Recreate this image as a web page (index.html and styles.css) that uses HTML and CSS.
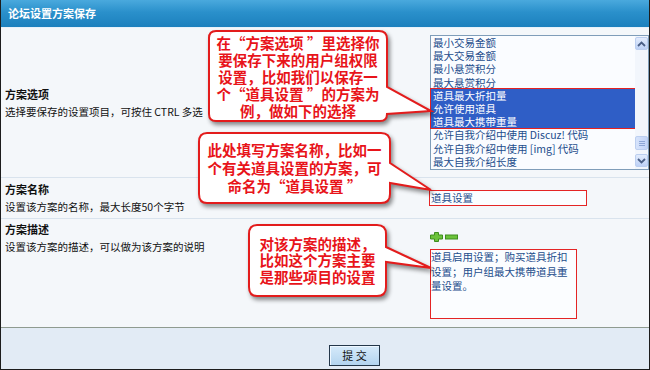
FILE: index.html
```html
<!DOCTYPE html>
<html lang="zh-CN">
<head>
<meta charset="utf-8">
<title>论坛设置方案保存</title>
<link rel="stylesheet" href="styles.css">
</head>
<body>
<div class="page">
  <div class="hdr">论坛设置方案保存</div>

  <div class="row r1">
    <div class="lbl"><b>方案选项</b><span>选择要保存的设置项目，可按住 CTRL 多选</span></div>
    <div class="ctl">
      <div class="select">
        <div class="opts">
          <div class="opt">最小交易金额</div>
          <div class="opt">最大交易金额</div>
          <div class="opt">最小悬赏积分</div>
          <div class="opt">最大悬赏积分</div>
          <div class="sel">
            <div class="opt">道具最大折扣量</div>
            <div class="opt">允许使用道具</div>
            <div class="opt">道具最大携带重量</div>
          </div>
          <div class="opt">允许自我介绍中使用 Discuz! 代码</div>
          <div class="opt">允许自我介绍中使用 [img] 代码</div>
          <div class="opt">最大自我介绍长度</div>
        </div>
        <div class="sbar">
          <div class="sbtn"><svg width="9" height="6" viewBox="0 0 9 6"><path d="M1 5 L4.5 1.5 L8 5" fill="none" stroke="#4a5f86" stroke-width="1.8"/></svg></div>
          <div class="track"></div>
          <div class="thumb"><i></i><i></i><i></i></div>
          <div class="sbtn dn"><svg width="9" height="6" viewBox="0 0 9 6"><path d="M1 1 L4.5 4.5 L8 1" fill="none" stroke="#4a5f86" stroke-width="1.8"/></svg></div>
        </div>
      </div>
    </div>
  </div>

  <div class="row r2">
    <div class="lbl"><b>方案名称</b><span>设置该方案的名称，最大长度50个字节</span></div>
    <div class="ctl">
      <div class="input">道具设置</div>
    </div>
  </div>

  <div class="row r3">
    <div class="lbl"><b>方案描述</b><span>设置该方案的描述，可以做为该方案的说明</span></div>
    <div class="ctl">
      <div class="pm">
        <svg width="13" height="10" viewBox="0 0 13 10"><path d="M4.5 0.5 H8.5 V3 H12.5 V7 H8.5 V9.5 H4.5 V7 H0.5 V3 H4.5 Z" fill="#6cc23a" stroke="#3f8d1e" stroke-width="1"/></svg>
        <svg width="13" height="10" viewBox="0 0 13 10"><rect x="0.5" y="3" width="12" height="4" fill="#6cc23a" stroke="#3f8d1e" stroke-width="1"/></svg>
      </div>
      <div class="textarea">道具启用设置；购买道具折扣设置；用户组最大携带道具重量设置。</div>
    </div>
  </div>

  <div class="foot">
    <div class="btn">提 交</div>
  </div>

  <div class="callout c1">
    <svg class="shape" width="230" height="100" viewBox="0 0 230 100"><path d="M8 1 H171 Q179 1 179 9 V57 L223 81 L179 84 Q179 91 172 91 H8 Q1 91 1 84 V8 Q1 1 8 1 Z"/></svg>
    <div class="ctext">在“方案选项 ”里选择你<br>要保存下来的用户组权限<br>设置，比如我们以保存一<br>个“道具设置 ”的方案为<br>例，做如下的选择</div>
  </div>

  <div class="callout c2">
    <svg class="shape" width="240" height="80" viewBox="0 0 240 80"><path d="M9 1 H183 Q192 1 192 10 V31 L233 58 L192 51 V62 Q192 71 183 71 H9 Q1 71 1 62 V10 Q1 1 9 1 Z"/></svg>
    <div class="ctext">此处填写方案名称，比如一<br>个有关道具设置的方案，可<br>命名为“道具设置 ”</div>
  </div>

  <div class="callout c3">
    <svg class="shape" width="190" height="80" viewBox="0 0 190 80"><path d="M9 1 H129 Q138 1 138 10 V23 L183 44 L138 38 V63 Q138 72 129 72 H9 Q1 72 1 63 V10 Q1 1 9 1 Z"/></svg>
    <div class="ctext">对该方案的描述，<br>比如这个方案主要<br>是那些项目的设置</div>
  </div>
</div>
</body>
</html>
```

FILE: styles.css
```css
html, body {
  margin: 0;
  padding: 0;
  background: #ffffff;
}

.page {
  position: relative;
  width: 650px;
  height: 370px;
  box-sizing: border-box;
  border: 1px solid #1c1c1c;
  border-top: 0;
  background: #f4f7fa;
  font-family: "Noto Sans CJK SC", "Liberation Sans", sans-serif;
  display: flex;
  flex-direction: column;
  overflow: hidden;
}

.hdr {
  height: 27px;
  flex: none;
  line-height: 27px;
  padding-left: 7px;
  color: #ffffff;
  font-size: 11px;
  font-weight: bold;
  background: linear-gradient(#4aa9dd, #2a90cb 45%, #1c80bd);
  border-bottom: 1px solid #e6f1fa;
}

.row {
  display: grid;
  grid-template-columns: 429px 1fr;
  flex: none;
  box-sizing: border-box;
  border-bottom: 1px solid #d9e3ed;
}

.r1 { height: 150px; }
.r2 { height: 41px; }
.r3 { height: 108px; border-bottom: 0; }

.lbl {
  display: flex;
  flex-direction: column;
  justify-content: center;
  padding-left: 4px;
  color: #111111;
}

.lbl b {
  font-size: 11px;
  line-height: 17px;
  font-weight: bold;
}

.lbl span {
  font-size: 10.5px;
  line-height: 17px;
}

.r3 .lbl {
  justify-content: flex-start;
  padding-top: 2px;
}

/* select box */
.r1 .ctl {
  padding-top: 7px;
}

.select {
  display: flex;
  height: 135px;
  box-sizing: border-box;
  border: 1px solid #7f9db9;
  background: #fafcff;
}

.opts {
  flex: 1;
  font-size: 10.5px;
  line-height: 13.2px;
  color: #1d4d8c;
}

.opt {
  padding-left: 2px;
  white-space: nowrap;
}

.sel {
  background: #2f5ec6;
  outline: 1px solid #e42222;
}

.sel .opt {
  color: #ffffff;
}

.sbar {
  width: 13px;
  display: flex;
  flex-direction: column;
  padding: 1px 0 2px;
  background: #f2f6fc;
}

.sbtn {
  height: 13px;
  box-sizing: border-box;
  border: 1px solid #bccff0;
  border-radius: 2px;
  background: linear-gradient(#e2ecfd, #bdd1f6);
  display: flex;
  align-items: center;
  justify-content: center;
}

.track {
  flex: 1;
}

.thumb {
  height: 14px;
  margin-bottom: 4px;
  box-sizing: border-box;
  border: 1px solid #bccff0;
  border-radius: 2px;
  background: linear-gradient(90deg, #d6e3fb, #c3d5f8);
  display: flex;
  flex-direction: column;
  align-items: center;
  justify-content: center;
  gap: 1px;
}

.thumb i {
  display: block;
  width: 6px;
  height: 1px;
  background: #8ea7d6;
}

/* name input */
.r2 .ctl {
  display: flex;
  align-items: center;
}

.input {
  margin-left: -1px;
  width: 158px;
  height: 16px;
  box-sizing: border-box;
  border: 1.5px solid #e42525;
  background: #fbfdff;
  color: #1d4d8c;
  font-size: 10.5px;
  line-height: 13px;
  padding-left: 1px;
}

/* description */
.r3 .ctl {
  padding-top: 13px;
}

.pm {
  display: flex;
  gap: 2px;
  height: 10px;
  margin-bottom: 7px;
}

.textarea {
  width: 147px;
  height: 70px;
  box-sizing: border-box;
  border: 1.5px solid #e42525;
  background: #fbfdff;
  color: #1d4d8c;
  font-size: 10.5px;
  line-height: 14.5px;
  padding-left: 0;
}

/* footer */
.foot {
  flex: 1;
  border-top: 1px solid #8f9b90;
  background: #e2ebf5;
  padding: 17px 0 0 328px;
}

.btn {
  width: 51px;
  height: 21px;
  box-sizing: border-box;
  border: 1px solid #24374a;
  background: linear-gradient(#d6eafa, #b3d4ef);
  box-shadow: inset 1px 1px 0 #eef7ff;
  font-size: 11px;
  line-height: 19px;
  text-align: center;
  color: #111111;
}

/* callouts */
.callout {
  position: absolute;
  display: flex;
  align-items: center;
  justify-content: center;
  text-align: center;
}

.callout .shape {
  position: absolute;
  left: 0;
  top: 0;
  overflow: visible;
  filter: drop-shadow(2px 3px 2px rgba(0, 0, 0, 0.45));
}

.callout .shape path {
  fill: #ffffff;
  stroke: #e31c1c;
  stroke-width: 2;
}

.ctext {
  position: relative;
  color: #e8141a;
  font-weight: bold;
  font-size: 14.5px;
  white-space: nowrap;
}

.c1 {
  left: 207px;
  top: 30px;
  width: 180px;
  height: 92px;
}

.c1 .ctext {
  line-height: 17px;
}

.c2 {
  left: 197px;
  top: 132px;
  width: 193px;
  height: 72px;
}

.c2 .ctext {
  line-height: 18px;
}

.c3 {
  left: 247px;
  top: 224px;
  width: 139px;
  height: 73px;
}

.c3 .ctext {
  line-height: 16.5px;
}
```
